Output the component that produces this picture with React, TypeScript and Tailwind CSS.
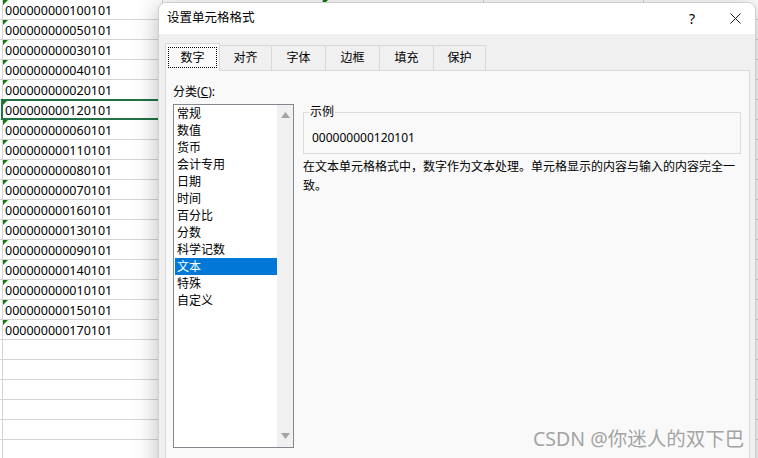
import React from 'react';

const cells = [
  '000000000100101',
  '000000000050101',
  '000000000030101',
  '000000000040101',
  '000000000020101',
  '000000000120101',
  '000000000060101',
  '000000000110101',
  '000000000080101',
  '000000000070101',
  '000000000160101',
  '000000000130101',
  '000000000090101',
  '000000000140101',
  '000000000010101',
  '000000000150101',
  '000000000170101',
];

const categories = ['常规', '数值', '货币', '会计专用', '日期', '时间', '百分比', '分数', '科学记数', '文本', '特殊', '自定义'];

const tabs = [
  { label: '数字', w: 'w-[55px]' },
  { label: '对齐', w: 'w-[53px]' },
  { label: '字体', w: 'w-[55px]' },
  { label: '边框', w: 'w-[55px]' },
  { label: '填充', w: 'w-[55px]' },
  { label: '保护', w: 'w-[53px]' },
];

const uiFont = { fontFamily: '"Noto Sans", "Noto Sans CJK SC", sans-serif' };

const Marker = () => (
  <span className="absolute top-0 left-0 w-0 h-0 border-t-[5px] border-t-[#0f7b0f] border-r-[5px] border-r-transparent" />
);

const Sheet = () => {
  const rows = Array.from({ length: 23 }, (_, i) => cells[i] ?? '');
  return (
    <div className="flex flex-col text-[12.5px] text-black">
      {rows.map((value, i) => (
        <div key={i} className="flex h-[20px] border-b border-[#d4d4d4]">
          <div className="w-[3px] border-r border-[#d4d4d4]" />
          <div className="relative w-[160px] border-r border-[#d4d4d4] pl-[2px] pt-[2px] leading-[18px]">
            {value && <Marker />}
            {value}
            {i === 5 && (
              <span className="absolute -top-[1px] -left-[2px] -right-px -bottom-px border-2 border-[#217346]" />
            )}
          </div>
          <div className="w-[160px] border-r border-[#d4d4d4]" />
          <div className="relative w-[161px] border-r border-[#d4d4d4]">{i === 0 && <Marker />}</div>
          <div className="w-[160px] border-r border-[#d4d4d4]" />
          <div className="flex-1" />
        </div>
      ))}
    </div>
  );
};

const Triangle = ({ down }: { down?: boolean }) => (
  <svg width="9" height="6" viewBox="0 0 9 6">
    <path d={down ? 'M0 0 L9 0 L4.5 6 Z' : 'M0 6 L9 6 L4.5 0 Z'} fill="#a3a3a3" />
  </svg>
);

const Dialog = () => (
  <div
    className="absolute left-[158px] top-[2px] w-[598px] h-[480px] flex flex-col rounded-t-[8px] overflow-hidden border border-[#cfcfcf] bg-[#f0f0f0] shadow-[0_4px_24px_rgba(0,0,0,0.28)] text-[12px] text-black"
    style={uiFont}
  >
    <div className="h-[31px] bg-white flex items-center">
      <span className="pl-[8px] text-[12.5px]">设置单元格格式</span>
      <span className="ml-auto w-[46px] text-center text-[14px]">?</span>
      <span className="w-[40px] flex items-center justify-center">
        <svg width="11" height="11" viewBox="0 0 11 11">
          <path d="M0.5 0.5 L10.5 10.5 M10.5 0.5 L0.5 10.5" stroke="#1a1a1a" strokeWidth="1" />
        </svg>
      </span>
    </div>

    <div className="flex-1 flex flex-col pl-[6px] pr-[5px] pt-[9px]">
      <div className="flex items-end h-[27px]">
        {tabs.map((t, i) =>
          i === 0 ? (
            <div
              key={t.label}
              className={`relative z-10 ${t.w} h-[28px] -mb-px flex items-center justify-center border border-b-0 border-[#d9d9d9] bg-[#f9f9f9]`}
            >
              <span className="px-[11px] leading-[19px] border border-dotted border-black">{t.label}</span>
            </div>
          ) : (
            <div
              key={t.label}
              className={`-ml-px ${t.w} h-[25px] flex items-center justify-center border border-b-0 border-[#d9d9d9] bg-[#f0f0f0]`}
            >
              {t.label}
            </div>
          )
        )}
      </div>

      <div className="flex-1 flex border border-[#d9d9d9] bg-[#f9f9f9]">
        <div className="pl-[7px] pt-[13px] flex flex-col">
          <div className="leading-[16px]">
            分类(<span className="underline">C</span>):
          </div>
          <div className="mt-[4px] w-[121px] h-[344px] flex border border-[#828790] bg-white">
            <div className="flex-1 pl-[1px]">
              {categories.map((c) => (
                <div
                  key={c}
                  className={`h-[17px] leading-[17px] pl-[2px] ${c === '文本' ? 'bg-[#0078d7] text-white' : ''}`}
                >
                  {c}
                </div>
              ))}
            </div>
            <div className="w-[16px] bg-[#f0f0f0] flex flex-col items-center justify-between pt-[7px] pb-[8px]">
              <Triangle />
              <Triangle down />
            </div>
          </div>
        </div>

        <div className="ml-[9px] pt-[41px] flex flex-col">
          <div className="relative w-[438px] h-[42px] border border-[#dcdcdc] pl-[8px] pt-[17px]">
            <span className="absolute -top-[9px] left-[5px] px-[1px] leading-[16px] bg-[#f9f9f9]">示例</span>
            <div className="leading-[16px]">000000000120101</div>
          </div>
          <p className="mt-[3px] w-[438px] leading-[19px]">
            在文本单元格格式中，数字作为文本处理。单元格显示的内容与输入的内容完全一致。
          </p>
        </div>
      </div>
    </div>
  </div>
);

export default function App() {
  return (
    <div className="relative w-[758px] h-[458px] overflow-hidden bg-white" style={uiFont}>
      <Sheet />
      <Dialog />
      <div className="absolute left-[533px] top-[428px] text-[19.5px] leading-[22px] text-[#a3a3a3] [text-shadow:0_0_1px_#fff]">
        CSDN @你迷人的双下巴
      </div>
    </div>
  );
}
